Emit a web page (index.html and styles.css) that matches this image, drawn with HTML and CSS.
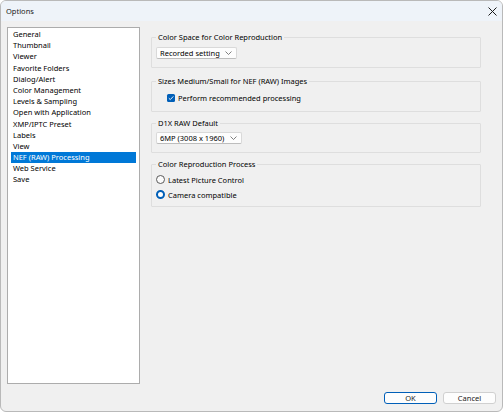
FILE: index.html
```html
<!DOCTYPE html>
<html lang="en">
<head>
    <meta charset="UTF-8">
    <title>Options</title>
    <link rel="stylesheet" href="styles.css">
</head>
<body>

    <div class="window">
        <div class="titlebar">
            <span class="title">Options</span>
            <span class="close">
                <svg width="9" height="9" viewBox="0 0 9 9"><path d="M0.5 0.5 L8.5 8.5 M8.5 0.5 L0.5 8.5" stroke="#1a1a1a" stroke-width="1" fill="none"/></svg>
            </span>
        </div>

        <div class="content">
            <div class="main">
                <!-- Catégories -->
                <ul class="category-list">
                    <li>General</li>
                    <li>Thumbnail</li>
                    <li>Viewer</li>
                    <li>Favorite Folders</li>
                    <li>Dialog/Alert</li>
                    <li>Color Management</li>
                    <li>Levels &amp; Sampling</li>
                    <li>Open with Application</li>
                    <li>XMP/IPTC Preset</li>
                    <li>Labels</li>
                    <li>View</li>
                    <li class="selected">NEF (RAW) Processing</li>
                    <li>Web Service</li>
                    <li>Save</li>
                </ul>

                <div class="panel">
                    <fieldset class="group group-space">
                        <legend>Color Space for Color Reproduction</legend>
                        <div class="select select-space">
                            <span>Recorded setting</span>
                            <svg class="chevron" width="7" height="4" viewBox="0 0 7 4"><path d="M0.5 0.5 L3.5 3.5 L6.5 0.5" stroke="#606060" stroke-width="0.8" fill="none"/></svg>
                        </div>
                    </fieldset>

                    <fieldset class="group group-sizes">
                        <legend>Sizes Medium/Small for NEF (RAW) Images</legend>
                        <div class="option indent">
                            <span class="checkbox">
                                <svg width="8" height="8" viewBox="0 0 8 8"><path d="M1.8 4.2 L3.3 5.6 L6.3 2.4" stroke="#ffffff" stroke-width="0.9" fill="none"/></svg>
                            </span>
                            <span>Perform recommended processing</span>
                        </div>
                    </fieldset>

                    <fieldset class="group group-d1x">
                        <legend>D1X RAW Default</legend>
                        <div class="select select-d1x">
                            <span>6MP (3008 x 1960)</span>
                            <svg class="chevron" width="7" height="4" viewBox="0 0 7 4"><path d="M0.5 0.5 L3.5 3.5 L6.5 0.5" stroke="#606060" stroke-width="0.8" fill="none"/></svg>
                        </div>
                    </fieldset>

                    <fieldset class="group group-process">
                        <legend>Color Reproduction Process</legend>
                        <div class="option">
                            <span class="radio"></span>
                            <span>Latest Picture Control</span>
                        </div>
                        <div class="option">
                            <span class="radio checked"></span>
                            <span>Camera compatible</span>
                        </div>
                    </fieldset>
                </div>
            </div>

            <div class="buttons">
                <button class="btn default">OK</button>
                <button class="btn">Cancel</button>
            </div>
        </div>
    </div>

</body>
</html>
```

FILE: styles.css
```css
/* Styles généraux */
body {
    margin: 0;
    padding: 0;
    background: #ffffff;
    font-family: 'Segoe UI', 'Noto Sans', sans-serif;
    font-size: 7.5px;
    color: #000000;
}

.window {
    width: 503px;
    height: 412px;
    box-sizing: border-box;
    border: 1px solid #b9b9b9;
    border-radius: 6px;
    overflow: hidden;
    display: flex;
    flex-direction: column;
    background-color: #f0f0f0;
}

.titlebar {
    height: 20px;
    flex: none;
    display: flex;
    align-items: center;
    justify-content: space-between;
    padding: 0 5px 0 5px;
    background-color: #eef3f9;
}

.title {
    font-size: 7.5px;
    color: #1a1a1a;
}

.close {
    display: flex;
    margin-top: 1px;
}

.content {
    flex: 1;
    display: flex;
    flex-direction: column;
    padding: 6px 6px 7px 6px;
}

.main {
    flex: 1;
    display: flex;
    gap: 11px;
}

/* Liste des catégories */
.category-list {
    list-style: none;
    margin: 0;
    width: 133px;
    box-sizing: border-box;
    padding: 1px 3px 0 3px;
    background-color: #ffffff;
    border: 1px solid #acacac;
}

.category-list li {
    height: 11.2px;
    line-height: 11.2px;
    padding-left: 2px;
    white-space: nowrap;
}

.category-list li.selected {
    background-color: #0078d7;
    color: #ffffff;
}

/* Panneau de droite */
.panel {
    width: 330px;
    display: flex;
    flex-direction: column;
    padding-top: 5px;
}

.group {
    margin: 0;
    padding: 0 4px;
    border: 1px solid #dedede;
    border-radius: 1px;
}

.group legend {
    padding: 0 2px;
    line-height: 11px;
    white-space: nowrap;
}

.group-space {
    padding-top: 4px;
    padding-bottom: 8px;
    margin-bottom: 8px;
}

.group-sizes {
    padding-top: 6px;
    padding-bottom: 9px;
    margin-bottom: 6px;
}

.group-d1x {
    padding-top: 3px;
    padding-bottom: 8px;
    margin-bottom: 6px;
}

.group-process {
    padding-top: 2px;
    padding-bottom: 4px;
}

.select {
    height: 12px;
    box-sizing: border-box;
    display: flex;
    align-items: center;
    justify-content: space-between;
    padding: 0 4px 0 3px;
    white-space: nowrap;
    background-color: #fdfdfd;
    border: 1px solid #d9d9d9;
    border-bottom-color: #bdbdbd;
    border-radius: 2px;
}

.select-space {
    width: 81px;
}

.select-d1x {
    width: 86px;
}

.option {
    display: flex;
    align-items: center;
    gap: 3px;
    height: 15px;
    white-space: nowrap;
}

.option.indent {
    padding-left: 11px;
    height: 9px;
}

.checkbox {
    width: 8px;
    height: 8px;
    border-radius: 1.5px;
    background-color: #005fb8;
    display: flex;
}

.radio {
    width: 9px;
    height: 9px;
    box-sizing: border-box;
    border-radius: 50%;
    border: 1px solid #5a5a5a;
    background-color: #fbfbfb;
}

.radio.checked {
    border: 2.5px solid #005fb8;
    background-color: #ffffff;
}

/* Boutons */
.buttons {
    flex: none;
    display: flex;
    justify-content: flex-end;
    gap: 6px;
    margin-top: 8px;
}

.btn {
    width: 53px;
    height: 12px;
    padding: 0;
    font-family: inherit;
    font-size: 7.5px;
    line-height: 10px;
    color: #1a1a1a;
    background-color: #fdfdfd;
    border: 1px solid #d0d0d0;
    border-radius: 3px;
}

.btn.default {
    border-color: #005fb8;
}
```
